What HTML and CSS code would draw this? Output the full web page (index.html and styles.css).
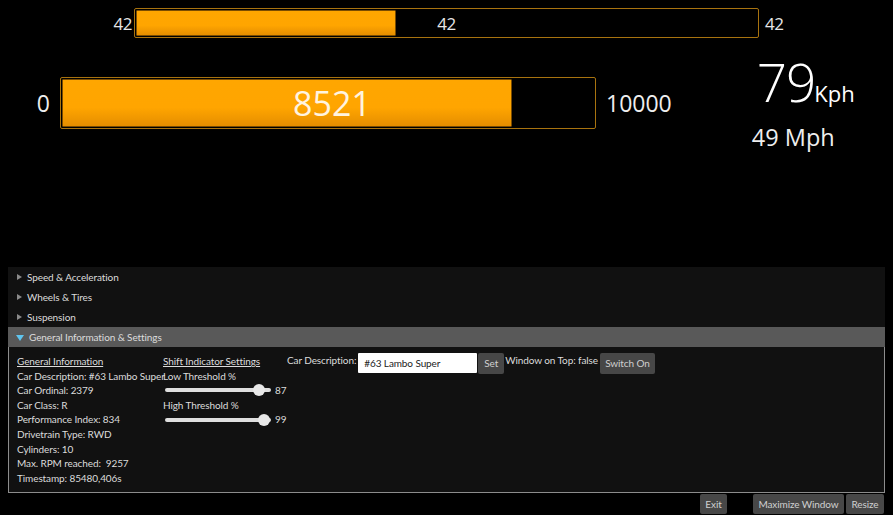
FILE: index.html
```html
<!DOCTYPE html>
<html>
<head>
<meta charset="utf-8">
<link rel="stylesheet" href="styles.css">
</head>
<body>
<div class="app">
  <div class="gear-row">
    <span class="lbl-left small">42</span>
    <div class="bar bar-small">
      <div class="fill" style="width:41.8%"></div>
      <span class="bar-value small">42</span>
    </div>
    <span class="lbl-right small">42</span>
  </div>
  <div class="main-row">
    <div class="rpm-row">
      <span class="rpm-min">0</span>
      <div class="bar bar-big">
        <div class="fill" style="width:84.6%"></div>
        <span class="bar-value big">8521</span>
      </div>
      <span class="rpm-max">10000</span>
    </div>
    <div class="speed">
      <div class="kph"><span class="kph-num">79</span><span class="kph-unit">Kph</span></div>
      <div class="mph">49 Mph</div>
    </div>
  </div>

  <div class="panel">
    <div class="exp-head"><span class="tri-right"></span>Speed &amp; Acceleration</div>
    <div class="exp-head"><span class="tri-right"></span>Wheels &amp; Tires</div>
    <div class="exp-head"><span class="tri-right"></span>Suspension</div>
    <div class="exp-head open"><span class="tri-down"></span>General Information &amp; Settings</div>
    <div class="exp-body">
      <div class="col col-info">
        <div class="line u">General Information</div>
        <div class="line">Car Description: #63 Lambo Super</div>
        <div class="line">Car Ordinal: 2379</div>
        <div class="line">Car Class: R</div>
        <div class="line">Performance Index: 834</div>
        <div class="line">Drivetrain Type: RWD</div>
        <div class="line">Cylinders: 10</div>
        <div class="line">Max. RPM reached:&nbsp; 9257</div>
        <div class="line">Timestamp: 85480,406s</div>
      </div>
      <div class="col col-shift">
        <div class="line u">Shift Indicator Settings</div>
        <div class="line">Low Threshold %</div>
        <div class="line slider-line">
          <div class="slider"><div class="track"></div><div class="thumb" style="left:88px"></div></div>
          <span class="slider-val">87</span>
        </div>
        <div class="line">High Threshold %</div>
        <div class="line slider-line">
          <div class="slider"><div class="track"></div><div class="thumb" style="left:93px"></div></div>
          <span class="slider-val">99</span>
        </div>
      </div>
      <div class="col col-settings">
        <span class="set-label">Car Description:</span>
        <div class="textbox">#63 Lambo Super</div>
        <div class="btn btn-set">Set</div>
        <span class="set-label">Window on Top: false</span>
        <div class="btn btn-switch">Switch On</div>
      </div>
    </div>
  </div>
  <div class="footer">
    <div class="btn btn-exit">Exit</div>
    <div class="btn btn-max">Maximize Window</div>
    <div class="btn btn-resize">Resize</div>
  </div>
</div>
</body>
</html>
```

FILE: styles.css
```css
html, body {
  margin: 0;
  padding: 0;
  background: #000;
}
body {
  font-family: "Open Sans", "Noto Sans", sans-serif;
  color: #eee;
}
.app {
  width: 893px;
  height: 515px;
  display: flex;
  flex-direction: column;
  box-sizing: border-box;
  padding-bottom: 1px;
}
.gear-row {
  display: flex;
  align-items: center;
  padding-top: 8px;
  height: 30px;
}
.lbl-left {
  width: 132px;
  text-align: right;
  margin-right: 2px;
}
.lbl-right {
  margin-left: 6px;
}
.small {
  font-size: 17px;
  color: #e6e6e6;
  letter-spacing: -0.5px;
}
.bar {
  position: relative;
  box-sizing: border-box;
  border: 1px solid #a8730f;
  border-radius: 2px;
  padding: 1px;
  display: flex;
  align-items: stretch;
}
.bar-small {
  width: 625px;
  height: 30px;
}
.bar-big {
  width: 536px;
  height: 52px;
}
.fill {
  box-sizing: border-box;
  background: linear-gradient(#ffa600 0%, #ffa500 60%, #e58e00 100%);
  border: 1px solid #7a4c00;
  border-radius: 1px;
}
.bar-value {
  position: absolute;
  left: 0;
  right: 0;
  top: 50%;
  transform: translateY(-50%);
  text-align: center;
}
.bar-value.big {
  left: 8px;
}
.big {
  font-size: 34px;
  color: #fff4e0;
  line-height: 1;
}
.main-row {
  display: flex;
  align-items: flex-start;
}
.rpm-row {
  display: flex;
  align-items: center;
  margin-top: 39px;
}
.rpm-min {
  width: 50px;
  text-align: right;
  margin-right: 10px;
  font-size: 23px;
  color: #eee;
}
.rpm-max {
  margin-left: 10px;
  font-size: 23px;
  color: #eee;
}
.speed {
  margin-left: 80px;
  margin-top: 17px;
  display: flex;
  flex-direction: column;
}
.kph {
  display: flex;
  align-items: baseline;
  margin-left: 5px;
  line-height: 1;
}
.kph-num {
  font-size: 53px;
  font-weight: 300;
  color: #fff;
  letter-spacing: -1px;
}
.kph-unit {
  font-size: 22px;
  color: #fff;
  margin-left: -1px;
}
.mph {
  font-size: 23.5px;
  color: #eee;
  margin-top: 18px;
  line-height: 1;
}
.panel {
  margin: auto 8px 0 8px;
  background: #111;
  font-family: "Lato", "Open Sans", sans-serif;
  font-size: 10px;
  letter-spacing: -0.1px;
  color: #dcdcdc;
}
.exp-head {
  height: 20px;
  display: flex;
  align-items: center;
  padding-left: 8px;
}
.exp-head.open {
  background: #595959;
}
.tri-right {
  width: 0;
  height: 0;
  border-top: 3.5px solid transparent;
  border-bottom: 3.5px solid transparent;
  border-left: 5px solid #8a8a8a;
  margin-right: 5px;
  margin-left: 1px;
}
.tri-down {
  width: 0;
  height: 0;
  border-left: 4px solid transparent;
  border-right: 4px solid transparent;
  border-top: 6px solid #5fc4ee;
  margin-right: 5px;
  margin-top: 1px;
}
.exp-body {
  height: 146px;
  box-sizing: border-box;
  border: 1px solid #8c8c8c;
  border-top: none;
  padding: 7px 8px 0 8px;
  display: flex;
  align-items: flex-start;
}
.line {
  height: 14.6px;
  line-height: 14.6px;
  white-space: nowrap;
}
.u {
  text-decoration: underline;
}
.col-info {
  width: 146px;
}
.col-shift {
  width: 124px;
}
.slider-line {
  display: flex;
  align-items: center;
}
.slider {
  position: relative;
  width: 106px;
  height: 12px;
  margin-left: 2px;
}
.track {
  position: absolute;
  left: 0;
  right: 0;
  top: 4px;
  height: 4px;
  border-radius: 2px;
  background: #dedede;
}
.thumb {
  position: absolute;
  top: 0;
  width: 12px;
  height: 12px;
  border-radius: 50%;
  background: #e8e8e8;
}
.slider-val {
  margin-left: 4px;
}
.col-settings {
  display: flex;
  align-items: flex-start;
  margin-top: -1px;
}
.set-label {
  line-height: 14.6px;
  margin-top: 0;
  white-space: pre;
}
.textbox {
  width: 119px;
  height: 20px;
  box-sizing: border-box;
  background: #fff;
  color: #222;
  line-height: 20px;
  padding-left: 6px;
  margin-left: 2px;
  border-radius: 1px;
}
.btn {
  background: #474747;
  color: #d0d0d0;
  height: 20px;
  line-height: 20px;
  text-align: center;
  box-sizing: border-box;
  border-radius: 2px;
  white-space: nowrap;
}
.btn-set {
  width: 26px;
  height: 21px;
  margin-left: 1px;
  margin-right: 1px;
}
.btn-switch {
  width: 55px;
  height: 21px;
  margin-left: 2px;
}
.footer {
  display: flex;
  justify-content: flex-end;
  padding-right: 9px;
  margin-top: 1px;
  font-family: "Lato", "Open Sans", sans-serif;
  font-size: 10px;
  letter-spacing: -0.1px;
}
.btn-exit {
  width: 27px;
  margin-right: 26px;
}
.btn-max {
  width: 91px;
  margin-right: 2px;
}
.btn-resize {
  width: 38px;
}
```
